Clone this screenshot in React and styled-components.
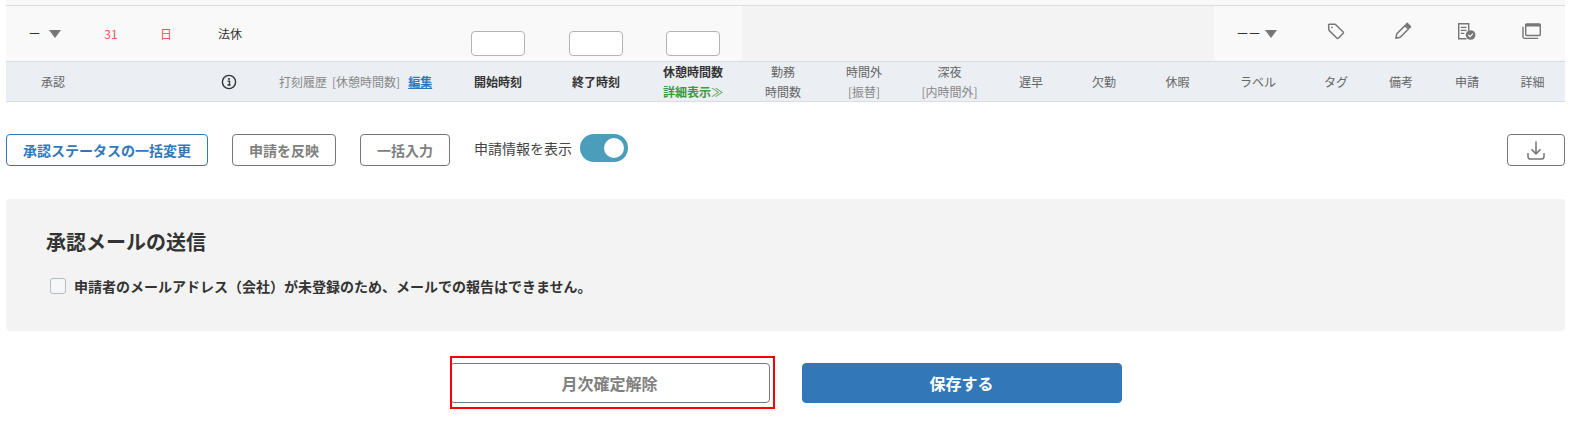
import React from "react";
import styled, { createGlobalStyle } from "styled-components";

const GlobalStyle = createGlobalStyle`
  html, body {
    margin: 0;
    padding: 0;
    background: #fff;
    font-family: "Noto Sans CJK JP", "Noto Sans", sans-serif;
    color: #333;
  }
`;

const tracks = {
  status: 82,
  date: 46,
  weekday: 64,
  kind: 64,
  history: 188,
  start: 98,
  end: 98,
  rest: 96,
  work: 82,
  over: 80,
  night: 91,
  late: 72,
  absent: 74,
  leave: 73,
  label: 90,
  tag: 64,
  note: 66,
  apply: 66,
  detail: 65,
};

const Page = styled.div`
  position: relative;
  width: 1572px;
  height: 423px;
  padding: 0 7px 0 6px;
  box-sizing: border-box;
  overflow: hidden;
`;

const TopStrip = styled.div`
  height: 5px;
  background: #f9f9f9;
  border-bottom: 1px solid #d9dce1;
`;

const Grid = styled.div`
  display: grid;
  grid-template-columns: ${Object.values(tracks).map((w) => `${w}px`).join(" ")};
`;

const DayRow = styled(Grid)`
  height: 55px;
  background: #f9f9f9;
  border-bottom: 1px solid #d9dce1;
`;

const Cell = styled.div`
  display: flex;
  align-items: center;
  justify-content: center;
  font-size: 12px;
  color: ${(p) => p.$color || "#333"};
  padding-right: ${(p) => p.$pad || 0}px;
`;

const InputCell = styled.div`
  display: flex;
  align-items: flex-end;
  justify-content: center;
  padding: 0 2px 5px 0;
`;

const TimeInput = styled.div`
  width: 54px;
  height: 25px;
  box-sizing: border-box;
  background: #fff;
  border: 1px solid #b3b3b3;
  border-radius: 4px;
`;

const GrayBlock = styled.div`
  grid-column: span 6;
  background: #f3f3f3;
`;

const Caret = styled.span`
  display: inline-block;
  width: 0;
  height: 0;
  margin-left: ${(p) => p.$gap}px;
  margin-top: 1px;
  border-left: 6.5px solid transparent;
  border-right: 6.5px solid transparent;
  border-top: 8px solid #777;
`;

const IconCell = styled(Cell)`
  padding-bottom: 5px;
  padding-left: ${(p) => p.$left || 0}px;
`;

const HeaderRow = styled(Grid)`
  height: 39px;
  background: #ebeef3;
  border-bottom: 1px solid #d9dce1;
`;

const HeadCell = styled.div`
  display: flex;
  flex-direction: column;
  align-items: center;
  justify-content: center;
  font-size: 12px;
  line-height: 20px;
  white-space: nowrap;
  color: ${(p) => (p.$strong ? "#333" : "#666")};
  font-weight: ${(p) => (p.$strong ? 700 : 400)};
  padding-right: ${(p) => (p.$strong ? 2 : p.$pad || 0)}px;
`;

const StatusHead = styled(HeadCell)`
  grid-column: span 3;
  align-items: flex-start;
  padding-left: 35px;
`;

const HistoryHead = styled(HeadCell)`
  flex-direction: row;
  justify-content: flex-start;
  padding-left: 17px;
  color: #888;
  gap: 5px;
`;

const EditLink = styled.a`
  color: #3278b9;
  font-weight: 700;
  text-decoration: underline;
  margin-left: 3px;
`;

const Sub = styled.span`
  color: #888;
`;

const DetailLink = styled.span`
  color: #3f9a3f;
  font-weight: 700;
`;

const Chevrons = styled.span`
  font-weight: 400;
`;

const Toolbar = styled.div`
  display: flex;
  align-items: flex-start;
  margin-top: 32px;
  height: 32px;
`;

const Button = styled.button`
  height: 32px;
  box-sizing: border-box;
  padding: 0;
  width: ${(p) => p.$width}px;
  margin-right: ${(p) => p.$gap || 0}px;
  background: #fff;
  border: 1px solid ${(p) => (p.$primary ? "#3278b9" : "#777")};
  border-radius: 4px;
  color: ${(p) => (p.$primary ? "#3278b9" : "#808080")};
  font: 700 14px "Noto Sans CJK JP", sans-serif;
`;

const ToggleLabel = styled.span`
  font-size: 14px;
  line-height: 28px;
  color: #444;
  margin-right: 8px;
`;

const Toggle = styled.div`
  width: 48px;
  height: 28px;
  box-sizing: border-box;
  padding: 4px 4px 4px 24px;
  border-radius: 14px;
  background: #4a9dbb;
`;

const Knob = styled.div`
  width: 20px;
  height: 20px;
  border-radius: 50%;
  background: #fff;
`;

const DownloadButton = styled(Button)`
  margin-left: auto;
  display: flex;
  align-items: center;
  justify-content: center;
`;

const MailPanel = styled.section`
  margin-top: 33px;
  height: 132px;
  box-sizing: border-box;
  padding: 28px 40px;
  background: #f3f3f3;
  border-radius: 4px;
`;

const PanelTitle = styled.h2`
  margin: 0;
  font-size: 20px;
  line-height: 30px;
  font-weight: 700;
  color: #333;
`;

const CheckRow = styled.div`
  display: flex;
  align-items: center;
  margin-top: 19px;
  margin-left: 4px;
  font-size: 14px;
  font-weight: 700;
  color: #333;
`;

const CheckBox = styled.span`
  width: 16px;
  height: 16px;
  box-sizing: border-box;
  margin-right: 8px;
  background: #f7f7f7;
  border: 1px solid #b5bcc4;
  border-radius: 3px;
`;

const Actions = styled.div`
  display: flex;
  justify-content: center;
  gap: 32px;
  margin-top: 32px;
`;

const ActionButton = styled.button`
  width: 320px;
  height: 40px;
  box-sizing: border-box;
  padding: 0;
  border-radius: 4px;
  border: 1px solid ${(p) => (p.$primary ? "#3278b9" : "#777")};
  background: ${(p) => (p.$primary ? "#3278b9" : "#fff")};
  color: ${(p) => (p.$primary ? "#fff" : "#808080")};
  font: 700 16px "Noto Sans CJK JP", sans-serif;
`;

const Highlight = styled.div`
  position: absolute;
  left: 450px;
  top: 356px;
  width: 325px;
  height: 53px;
  box-sizing: border-box;
  border: 2px solid #f00;
  pointer-events: none;
`;

const Info = () => (
  <svg width="16" height="16" viewBox="0 0 16 16" fill="none">
    <circle cx="8" cy="8" r="6.6" stroke="#333" strokeWidth="1.4" />
    <circle cx="8" cy="4.9" r="1" fill="#333" />
    <path d="M6.6 7.1h1.9v3.8M6.4 11h3.2" stroke="#333" strokeWidth="1.3" />
  </svg>
);

const TagIcon = () => (
  <svg width="18" height="18" viewBox="0 0 18 18" fill="none" stroke="#777" strokeWidth="1.5" strokeLinejoin="round">
    <path d="M1.6 3.2a1 1 0 0 1 1-1h5.6l8 7.8a1 1 0 0 1 0 1.3l-4.9 4.9a1 1 0 0 1-1.3 0L2 8.4z" />
    <circle cx="5" cy="5.4" r=".8" fill="#777" stroke="none" />
  </svg>
);

const PencilIcon = () => (
  <svg width="18" height="18" viewBox="0 0 18 18" fill="none" stroke="#777" strokeWidth="1.5" strokeLinejoin="round">
    <path d="M1.8 16.2l1-4.4 8.2-8.2 3.4 3.4-8.2 8.2z" />
    <path d="M12 2.6l1.2-1.2 3.4 3.4-1.2 1.2z" fill="#777" />
  </svg>
);

const RequestIcon = () => (
  <svg width="19" height="17" viewBox="0 0 19 17" fill="none">
    <path d="M9.5 15.8H1.7V.8h10v7" stroke="#777" strokeWidth="1.4" />
    <path d="M3.8 4.4h5.8M3.8 7.4h5.8M3.8 10.4h3.4" stroke="#777" strokeWidth="1.3" />
    <circle cx="13.6" cy="12" r="4.8" fill="#777" />
    <path d="M11.4 12l1.7 1.7 2.8-3" stroke="#fff" strokeWidth="1.2" />
  </svg>
);

const WindowIcon = () => (
  <svg width="19" height="17" viewBox="0 0 19 17" fill="none" stroke="#777" strokeWidth="1.4">
    <rect x="3.7" y=".9" width="14.6" height="11.6" rx="1" />
    <path d="M3.7 2.2h14.6" strokeWidth="2.6" />
    <path d="M1 3.8v9.9a1.7 1.7 0 0 0 1.7 1.7h13.4" />
  </svg>
);

const DownloadIcon = () => (
  <svg width="18" height="19" viewBox="0 0 18 19" fill="none" stroke="#777" strokeWidth="1.5">
    <path d="M9 .5v12M4.5 8.4l4.5 4.5 4.5-4.5" />
    <path d="M1 12v3.4a2.6 2.6 0 0 0 2.6 2.6h10.8a2.6 2.6 0 0 0 2.6-2.6V12" />
  </svg>
);

const App = () => (
  <Page>
    <GlobalStyle />
    <TopStrip />
    <DayRow>
      <Cell $pad={5}>
        ー<Caret $gap={8} />
      </Cell>
      <Cell $color="#ff4d5b">31</Cell>
      <Cell $color="#ff4d5b">日</Cell>
      <Cell>法休</Cell>
      <div />
      <InputCell>
        <TimeInput />
      </InputCell>
      <InputCell>
        <TimeInput />
      </InputCell>
      <InputCell>
        <TimeInput />
      </InputCell>
      <GrayBlock />
      <Cell $pad={5}>
        ーー<Caret $gap={4} />
      </Cell>
      <IconCell>
        <TagIcon />
      </IconCell>
      <IconCell $left={4}>
        <PencilIcon />
      </IconCell>
      <IconCell $pad={2}>
        <RequestIcon />
      </IconCell>
      <IconCell $pad={2}>
        <WindowIcon />
      </IconCell>
    </DayRow>
    <HeaderRow>
      <StatusHead>承認</StatusHead>
      <HeadCell $pad={2}>
        <Info />
      </HeadCell>
      <HistoryHead>
        <span>打刻履歴</span>
        <span>[休憩時間数]</span>
        <EditLink>編集</EditLink>
      </HistoryHead>
      <HeadCell $strong>開始時刻</HeadCell>
      <HeadCell $strong>終了時刻</HeadCell>
      <HeadCell $strong>
        <span>休憩時間数</span>
        <DetailLink>
          詳細表示<Chevrons>≫</Chevrons>
        </DetailLink>
      </HeadCell>
      <HeadCell>
        <span>勤務</span>
        <span>時間数</span>
      </HeadCell>
      <HeadCell>
        <span>時間外</span>
        <Sub>[振替]</Sub>
      </HeadCell>
      <HeadCell>
        <span>深夜</span>
        <Sub>[内時間外]</Sub>
      </HeadCell>
      <HeadCell>遅早</HeadCell>
      <HeadCell>欠勤</HeadCell>
      <HeadCell>休暇</HeadCell>
      <HeadCell $pad={2}>ラベル</HeadCell>
      <HeadCell>タグ</HeadCell>
      <HeadCell>備考</HeadCell>
      <HeadCell>申請</HeadCell>
      <HeadCell>詳細</HeadCell>
    </HeaderRow>
    <Toolbar>
      <Button $primary $width={202} $gap={24}>
        承認ステータスの一括変更
      </Button>
      <Button $width={104} $gap={24}>
        申請を反映
      </Button>
      <Button $width={90} $gap={24}>
        一括入力
      </Button>
      <ToggleLabel>申請情報を表示</ToggleLabel>
      <Toggle>
        <Knob />
      </Toggle>
      <DownloadButton $width={58} aria-label="download">
        <DownloadIcon />
      </DownloadButton>
    </Toolbar>
    <MailPanel>
      <PanelTitle>承認メールの送信</PanelTitle>
      <CheckRow>
        <CheckBox />
        申請者のメールアドレス（会社）が未登録のため、メールでの報告はできません。
      </CheckRow>
    </MailPanel>
    <Actions>
      <ActionButton>月次確定解除</ActionButton>
      <ActionButton $primary>保存する</ActionButton>
    </Actions>
    <Highlight />
  </Page>
);

export default App;
